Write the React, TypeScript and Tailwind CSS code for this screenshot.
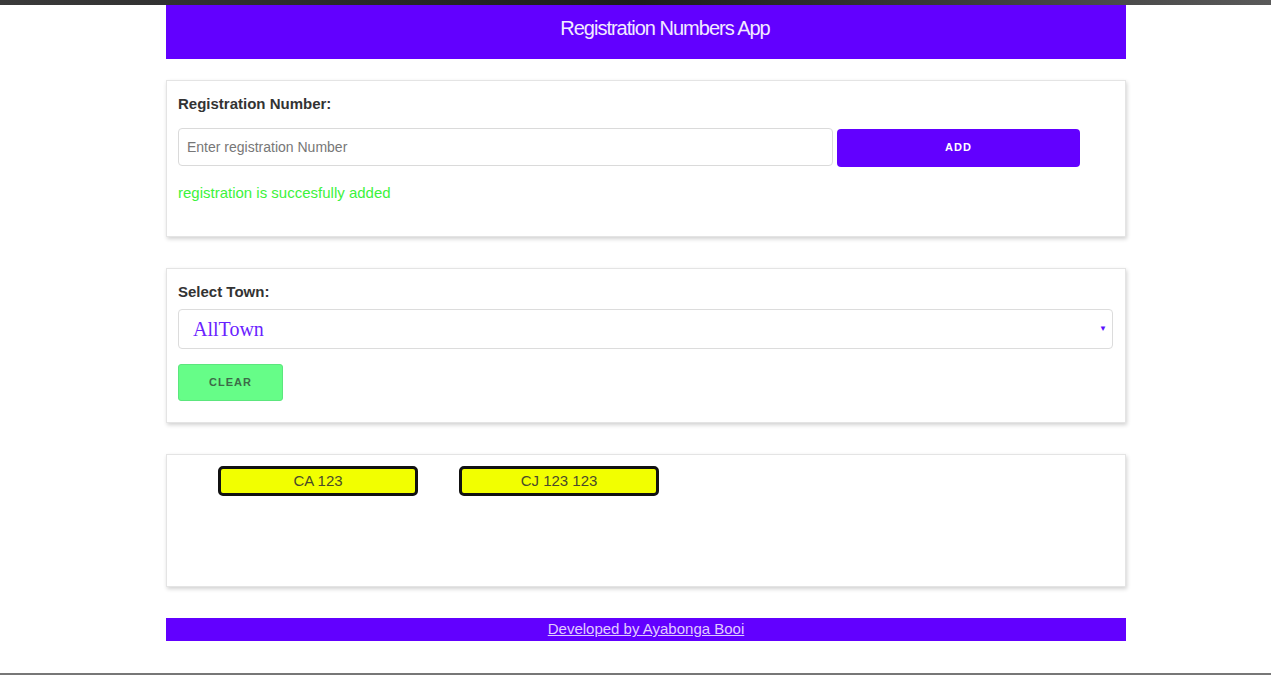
import React, { useState } from "react";

function App() {
  const [regNumber, setRegNumber] = useState<string>("");
  const [town, setTown] = useState<string>("AllTown");
  const plates = ["CA 123", "CJ 123 123"];

  return (
    <div className="min-h-[675px] bg-white flex flex-col font-['Liberation_Sans',Arial,sans-serif]">
      {/* strip of the background photo peeking above the page */}
      <div className="h-[5px] w-full bg-gradient-to-r from-[#3a3a3a] via-[#1c1c1c] to-[#5a5a5a]" />

      <div className="w-[960px] ml-[166px] flex flex-col">
        <header className="h-[54px] bg-[#6200ff] flex justify-center pt-[11px] pl-[38px]">
          <h1 className="text-[20px] leading-[24px] text-[#f2eaff] tracking-[-1px]">
            Registration Numbers App
          </h1>
        </header>

        <section className="mt-[21px] h-[157px] bg-white border border-[#e4e4e4] shadow-[1px_2px_4px_rgba(0,0,0,0.18)] px-[11px] pt-[12px]">
          <label className="block text-[15px] font-bold text-[#333]">
            Registration Number:
          </label>
          <div className="flex items-center gap-[4px] mt-[11px]">
            <input
              type="text"
              value={regNumber}
              onChange={(e) => setRegNumber(e.target.value)}
              placeholder="Enter registration Number"
              className="w-[655px] h-[38px] px-[8px] text-[14px] text-[#333] placeholder:text-[#777] border border-[#dadada] rounded-[4px] outline-none"
            />
            <button className="w-[243px] h-[38px] mt-[2px] bg-[#6200ff] text-white text-[11px] font-bold tracking-[1px] rounded-[4px]">
              ADD
            </button>
          </div>
          <p className="mt-[15px] text-[15px] text-[#3cf23c]">
            registration is succesfully added
          </p>
        </section>

        <section className="mt-[31px] h-[155px] bg-white border border-[#e4e4e4] shadow-[1px_2px_4px_rgba(0,0,0,0.18)] px-[11px] pt-[12px]">
          <label className="block text-[15px] font-bold text-[#333]">
            Select Town:
          </label>
          <div className="relative mt-[5px] w-[935px]">
            <select
              value={town}
              onChange={(e) => setTown(e.target.value)}
              className="appearance-none w-full h-[40px] pl-[14px] pr-[30px] font-['Liberation_Serif',serif] text-[20px] text-[#6a22ff] border border-[#dcdcdc] rounded-[4px] bg-white outline-none"
            >
              <option value="AllTown">AllTown</option>
              <option value="CA">Cape Town</option>
              <option value="CJ">Paarl</option>
              <option value="CL">Stellenbosch</option>
            </select>
            <span className="absolute right-[6px] top-[14px] text-[8px] text-[#5a10ff] pointer-events-none">
              ▼
            </span>
          </div>
          <button className="mt-[15px] w-[105px] h-[37px] bg-[#66fd88] text-[#3d6b48] text-[11px] font-bold tracking-[1px] rounded-[3px] border border-[#5ce67d]">
            CLEAR
          </button>
        </section>

        <section className="mt-[31px] h-[133px] bg-white border border-[#e4e4e4] shadow-[1px_2px_4px_rgba(0,0,0,0.18)] pl-[51px] pt-[11px]">
          <div className="flex gap-[41px]">
            {plates.map((plate) => (
              <div
                key={plate}
                className="w-[200px] h-[30px] bg-[#f2ff00] border-[3px] border-[#111] rounded-[5px] flex items-center justify-center text-[15px] text-[#4a4a2a]"
              >
                {plate}
              </div>
            ))}
          </div>
        </section>

        <footer className="mt-[31px] h-[23px] bg-[#6200ff] flex items-center justify-center">
          <a href="#" className="text-[15px] text-[#e0ccff] underline">
            Developed by Ayabonga Booi
          </a>
        </footer>
      </div>

      <div className="flex-1" />
      <div className="h-[2px] bg-[#777]" />
    </div>
  );
}

export default App;
